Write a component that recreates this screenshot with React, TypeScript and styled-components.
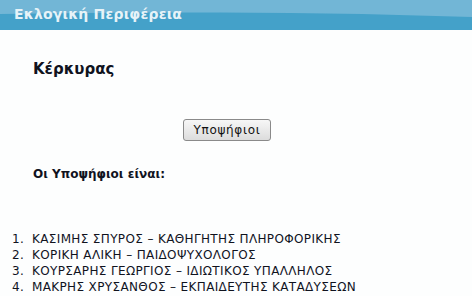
import React from "react";
import styled, { createGlobalStyle } from "styled-components";

const Global = createGlobalStyle`
  html, body {
    margin: 0;
    padding: 0;
    background: #fdfefe;
  }
  body {
    font-family: Verdana, "DejaVu Sans", sans-serif;
    color: #10131e;
  }
`;

const Header = styled.div`
  position: relative;
  height: 30px;
  background: #72b6d6;
  overflow: hidden;
`;

const Wave = styled.svg`
  position: absolute;
  left: 0;
  top: 0;
`;

const HeaderTitle = styled.h1`
  position: relative;
  margin: 0;
  padding: 5px 0 0 14px;
  font-size: 14px;
  font-weight: bold;
  color: #e6f3f8;
  line-height: 18px;
  letter-spacing: 0.2px;
`;

const Content = styled.div`
  padding: 30px 0 0 33px;
`;

const Place = styled.h2`
  margin: 0;
  font-size: 15px;
  font-weight: bold;
  line-height: 18px;
`;

const ButtonRow = styled.div`
  display: flex;
  padding: 41px 0 0 150px;
`;

const Button = styled.button`
  font-family: Verdana, "DejaVu Sans", sans-serif;
  font-size: 12px;
  letter-spacing: 0.7px;
  color: #111;
  width: 88px;
  height: 22px;
  padding: 0;
  border: 1px solid #8a8a8a;
  border-radius: 3px;
  background: linear-gradient(#f7f7f7, #dcdcdc);
`;

const SubTitle = styled.h3`
  margin: 0;
  padding-top: 26px;
  font-size: 12px;
  font-weight: bold;
  line-height: 14px;
`;

const List = styled.ol`
  margin: 50px 0 0;
  padding: 0 0 0 12px;
  list-style: none;
  counter-reset: item;
  font-size: 12px;
  line-height: 16px;
  letter-spacing: 0.36px;
`;

const Item = styled.li`
  counter-increment: item;
  white-space: nowrap;

  &::before {
    content: counter(item) ".";
    display: inline-block;
    width: 20px;
  }
`;

const candidates = [
  "ΚΑΣΙΜΗΣ ΣΠΥΡΟΣ – ΚΑΘΗΓΗΤΗΣ ΠΛΗΡΟΦΟΡΙΚΗΣ",
  "ΚΟΡΙΚΗ ΑΛΙΚΗ – ΠΑΙΔΟΨΥΧΟΛΟΓΟΣ",
  "ΚΟΥΡΣΑΡΗΣ ΓΕΩΡΓΙΟΣ – ΙΔΙΩΤΙΚΟΣ ΥΠΑΛΛΗΛΟΣ",
  "ΜΑΚΡΗΣ ΧΡΥΣΑΝΘΟΣ – ΕΚΠΑΙΔΕΥΤΗΣ ΚΑΤΑΔΥΣΕΩΝ",
];

export default function App() {
  return (
    <>
      <Global />
      <Header>
        <Wave width="472" height="30" viewBox="0 0 472 30">
          <path d="M0,14 C120,12 300,11 472,17 L472,30 L0,30 Z" fill="#44a1c9" />
        </Wave>
        <HeaderTitle>Εκλογική Περιφέρεια</HeaderTitle>
      </Header>
      <Content>
        <Place>Κέρκυρας</Place>
        <ButtonRow>
          <Button>Υποψήφιοι</Button>
        </ButtonRow>
        <SubTitle>Οι Υποψήφιοι είναι:</SubTitle>
      </Content>
      <List>
        {candidates.map((c) => (
          <Item key={c}>{c}</Item>
        ))}
      </List>
    </>
  );
}
